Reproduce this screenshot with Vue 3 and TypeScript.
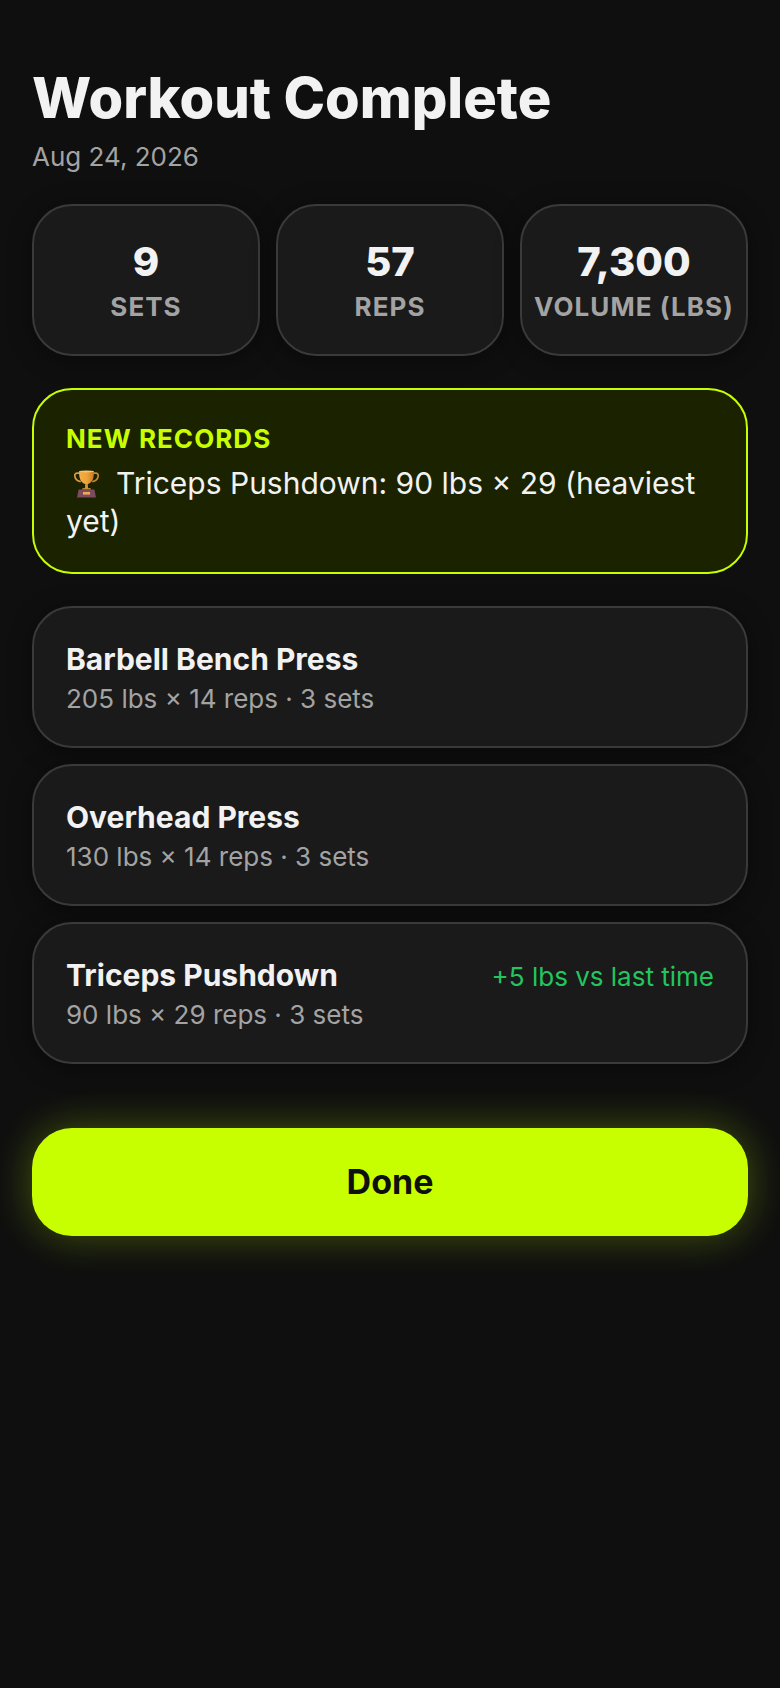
<script setup lang="ts">
interface Stat { value: string; label: string }
interface Exercise { name: string; detail: string; delta?: string }
const stats: Stat[] = [
  { value: '9', label: 'Sets' },
  { value: '57', label: 'Reps' },
  { value: '7,300', label: 'Volume (lbs)' },
]
const exercises: Exercise[] = [
  { name: 'Barbell Bench Press', detail: '205 lbs × 14 reps · 3 sets' },
  { name: 'Overhead Press', detail: '130 lbs × 14 reps · 3 sets' },
  { name: 'Triceps Pushdown', detail: '90 lbs × 29 reps · 3 sets', delta: '+5 lbs vs last time' },
]
</script>

<template>
  <main class="screen">
    <h1 class="title">Workout Complete</h1>
    <p class="date">Aug 24, 2026</p>

    <section class="stats">
      <div v-for="s in stats" :key="s.label" class="stat">
        <div class="stat-value">{{ s.value }}</div>
        <div class="stat-label">{{ s.label }}</div>
      </div>
    </section>

    <section class="records">
      <div class="records-title">NEW RECORDS</div>
      <div class="records-text">
        <svg class="trophy" viewBox="0 0 25 28" width="25" height="28" aria-hidden="true">
          <defs>
            <linearGradient id="cup" x1="0" y1="0" x2="1" y2="0">
              <stop offset="0" stop-color="#f2b04a" />
              <stop offset="0.55" stop-color="#eda238" />
              <stop offset="1" stop-color="#c97a26" />
            </linearGradient>
          </defs>
          <path d="M6 3.2H3.2C1.4 3.2.6 4.4.8 6c.4 3 2.8 5 6 5.6" fill="none" stroke="#dd9a3c" stroke-width="1.7" />
          <path d="M19 3.2h2.8c1.8 0 2.6 1.2 2.4 2.8-.4 3-2.8 5-6 5.6" fill="none" stroke="#c98632" stroke-width="1.7" />
          <path d="M5.2 1h14.6c.4 5.6-.8 11.4-5.8 13h-3C6 12.4 4.8 6.6 5.2 1z" fill="url(#cup)" />
          <ellipse cx="12.5" cy="1.4" rx="7.3" ry="1" fill="#f8c66a" />
          <path d="M11.2 14h2.6l.3 4.4h-3.2z" fill="#d98f32" />
          <path d="M8.6 18.2h7.8l.6 1.4H8z" fill="#e8a544" />
          <path d="M4.6 19.6h15.8L22 27.6H3z" fill="#7d4a5e" />
          <rect x="9" y="22" width="7" height="2.6" fill="#eeaa52" />
        </svg>Triceps Pushdown: 90 lbs × 29 (heaviest yet)
      </div>
    </section>

    <section class="list">
      <div v-for="e in exercises" :key="e.name" class="exercise">
        <div>
          <div class="ex-name">{{ e.name }}</div>
          <div class="ex-detail">{{ e.detail }}</div>
        </div>
        <div v-if="e.delta" class="ex-delta">{{ e.delta }}</div>
      </div>
    </section>

    <button class="done" type="button">Done</button>
  </main>
</template>

<style>
html, body { margin: 0; background: #0f0f0f; }
</style>

<style scoped>
.screen {
  box-sizing: border-box;
  min-height: 1688px;
  padding: 64px 32px 32px;
  background: #0f0f0f;
  color: #f2f2f2;
  font-family: Inter, "Noto Sans", sans-serif;
}
.title {
  margin: 0;
  font-size: 56px;
  line-height: 68px;
  font-weight: 800;
  color: #f2f2f2;
}
.date {
  margin: 9px 0 0;
  font-size: 26px;
  line-height: 32px;
  color: #a3a3a3;
}
.stats {
  display: grid;
  grid-template-columns: repeat(3, 1fr);
  gap: 16px;
  margin-top: 31px;
}
.stat {
  box-sizing: border-box;
  height: 152px;
  padding: 32px 0;
  border: 2px solid #3a3a3a;
  border-radius: 40px;
  background: #1a1a1a;
  text-align: center;
  box-shadow: 0 4px 24px rgba(0, 0, 0, 0.4);
}
.stat-value {
  font-size: 40px;
  line-height: 48px;
  font-weight: 800;
  color: #f2f2f2;
}
.stat-label {
  margin-top: 5px;
  font-size: 26px;
  line-height: 32px;
  font-weight: 700;
  letter-spacing: 1.04px;
  text-transform: uppercase;
  color: #a3a3a3;
}
.records {
  box-sizing: border-box;
  height: 186px;
  margin-top: 32px;
  padding: 33px 32px 0;
  border: 2px solid #c8ff00;
  border-radius: 40px;
  background: #1a2200;
}
.records-title {
  font-size: 26px;
  line-height: 32px;
  font-weight: 700;
  letter-spacing: 1.04px;
  color: #c8ff00;
}
.records-text {
  margin-top: 9px;
  font-size: 30px;
  line-height: 38px;
  color: #f2f2f2;
}
.trophy {
  margin: 0 17px 0 8px;
  vertical-align: -4px;
}
.list {
  display: flex;
  flex-direction: column;
  gap: 16px;
  margin-top: 32px;
}
.exercise {
  box-sizing: border-box;
  height: 142px;
  padding: 32px 32px 0;
  display: flex;
  justify-content: space-between;
  border: 2px solid #3a3a3a;
  border-radius: 40px;
  background: #1a1a1a;
  box-shadow: 0 4px 24px rgba(0, 0, 0, 0.4);
}
.ex-name {
  font-size: 30px;
  line-height: 38px;
  font-weight: 700;
  color: #f2f2f2;
}
.ex-detail {
  margin-top: 2px;
  font-size: 26px;
  line-height: 38px;
  color: #a3a3a3;
}
.ex-delta {
  margin-top: 2px;
  font-size: 26px;
  line-height: 38px;
  color: #22c55e;
}
.done {
  display: block;
  width: 100%;
  height: 108px;
  margin-top: 64px;
  padding: 0 0 2px;
  border: none;
  border-radius: 40px;
  background: #c8ff00;
  color: #0f0f0f;
  font-family: inherit;
  font-size: 34px;
  font-weight: 700;
  box-shadow: 0 0 40px rgba(200, 255, 0, 0.3);
}
</style>
